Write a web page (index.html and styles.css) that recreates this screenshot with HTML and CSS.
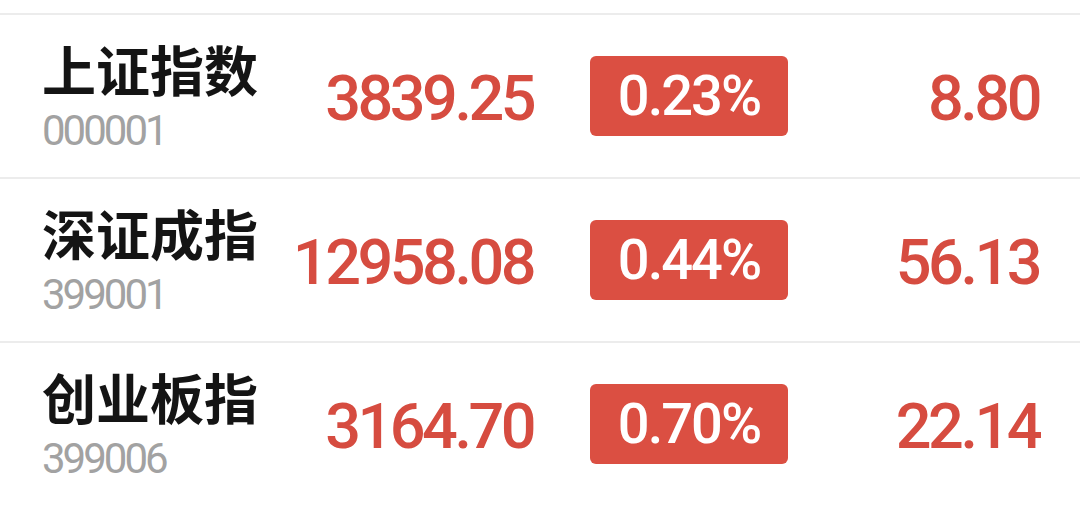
FILE: index.html
```html
<!DOCTYPE html>
<html lang="zh-CN">
<head>
    <meta charset="UTF-8">
    <meta name="viewport" content="width=device-width, initial-scale=1.0">
    <title>指数行情</title>
    <link rel="stylesheet" href="styles.css">
</head>
<body>

    <div class="index-list">
        <div class="index-row">
            <div class="index-name">
                <div class="name">上证指数</div>
                <div class="code">000001</div>
            </div>
            <div class="price">3839.25</div>
            <div class="percent">0.23%</div>
            <div class="change">8.80</div>
        </div>

        <div class="index-row">
            <div class="index-name">
                <div class="name">深证成指</div>
                <div class="code">399001</div>
            </div>
            <div class="price">12958.08</div>
            <div class="percent">0.44%</div>
            <div class="change">56.13</div>
        </div>

        <div class="index-row">
            <div class="index-name">
                <div class="name">创业板指</div>
                <div class="code">399006</div>
            </div>
            <div class="price">3164.70</div>
            <div class="percent">0.70%</div>
            <div class="change">22.14</div>
        </div>
    </div>

</body>
</html>
```

FILE: styles.css
```css
body {
    font-family: Roboto, "Noto Sans CJK SC", sans-serif;
    background-color: #fff;
    margin: 0;
    padding-top: 13px;
    overflow: hidden;
}

.index-list {
    border-top: 2px solid #ececec;
}

.index-row {
    display: grid;
    grid-template-columns: 240px 251px 255px 251px;
    align-items: center;
    height: 162px;
    padding: 0 40px 0 42px;
    border-bottom: 2px solid #ececec;
}

.name {
    font-family: "Noto Sans CJK SC", sans-serif;
    font-weight: bold;
    font-size: 54px;
    line-height: 56px;
    color: #141414;
    white-space: nowrap;
}

.code {
    margin-top: 14px;
    font-size: 42px;
    line-height: 40px;
    letter-spacing: -3px;
    color: #a2a2a2;
}

.price,
.change {
    font-size: 63px;
    font-weight: 500;
    letter-spacing: -3.5px;
    color: #d64c40;
    text-align: right;
    padding-top: 4px;
}

.percent {
    margin-left: 57px;
    height: 80px;
    border-radius: 6px;
    background-color: #db4f42;
    color: #fff;
    font-size: 56px;
    font-weight: 500;
    letter-spacing: -2px;
    display: flex;
    align-items: center;
    justify-content: center;
}
```
